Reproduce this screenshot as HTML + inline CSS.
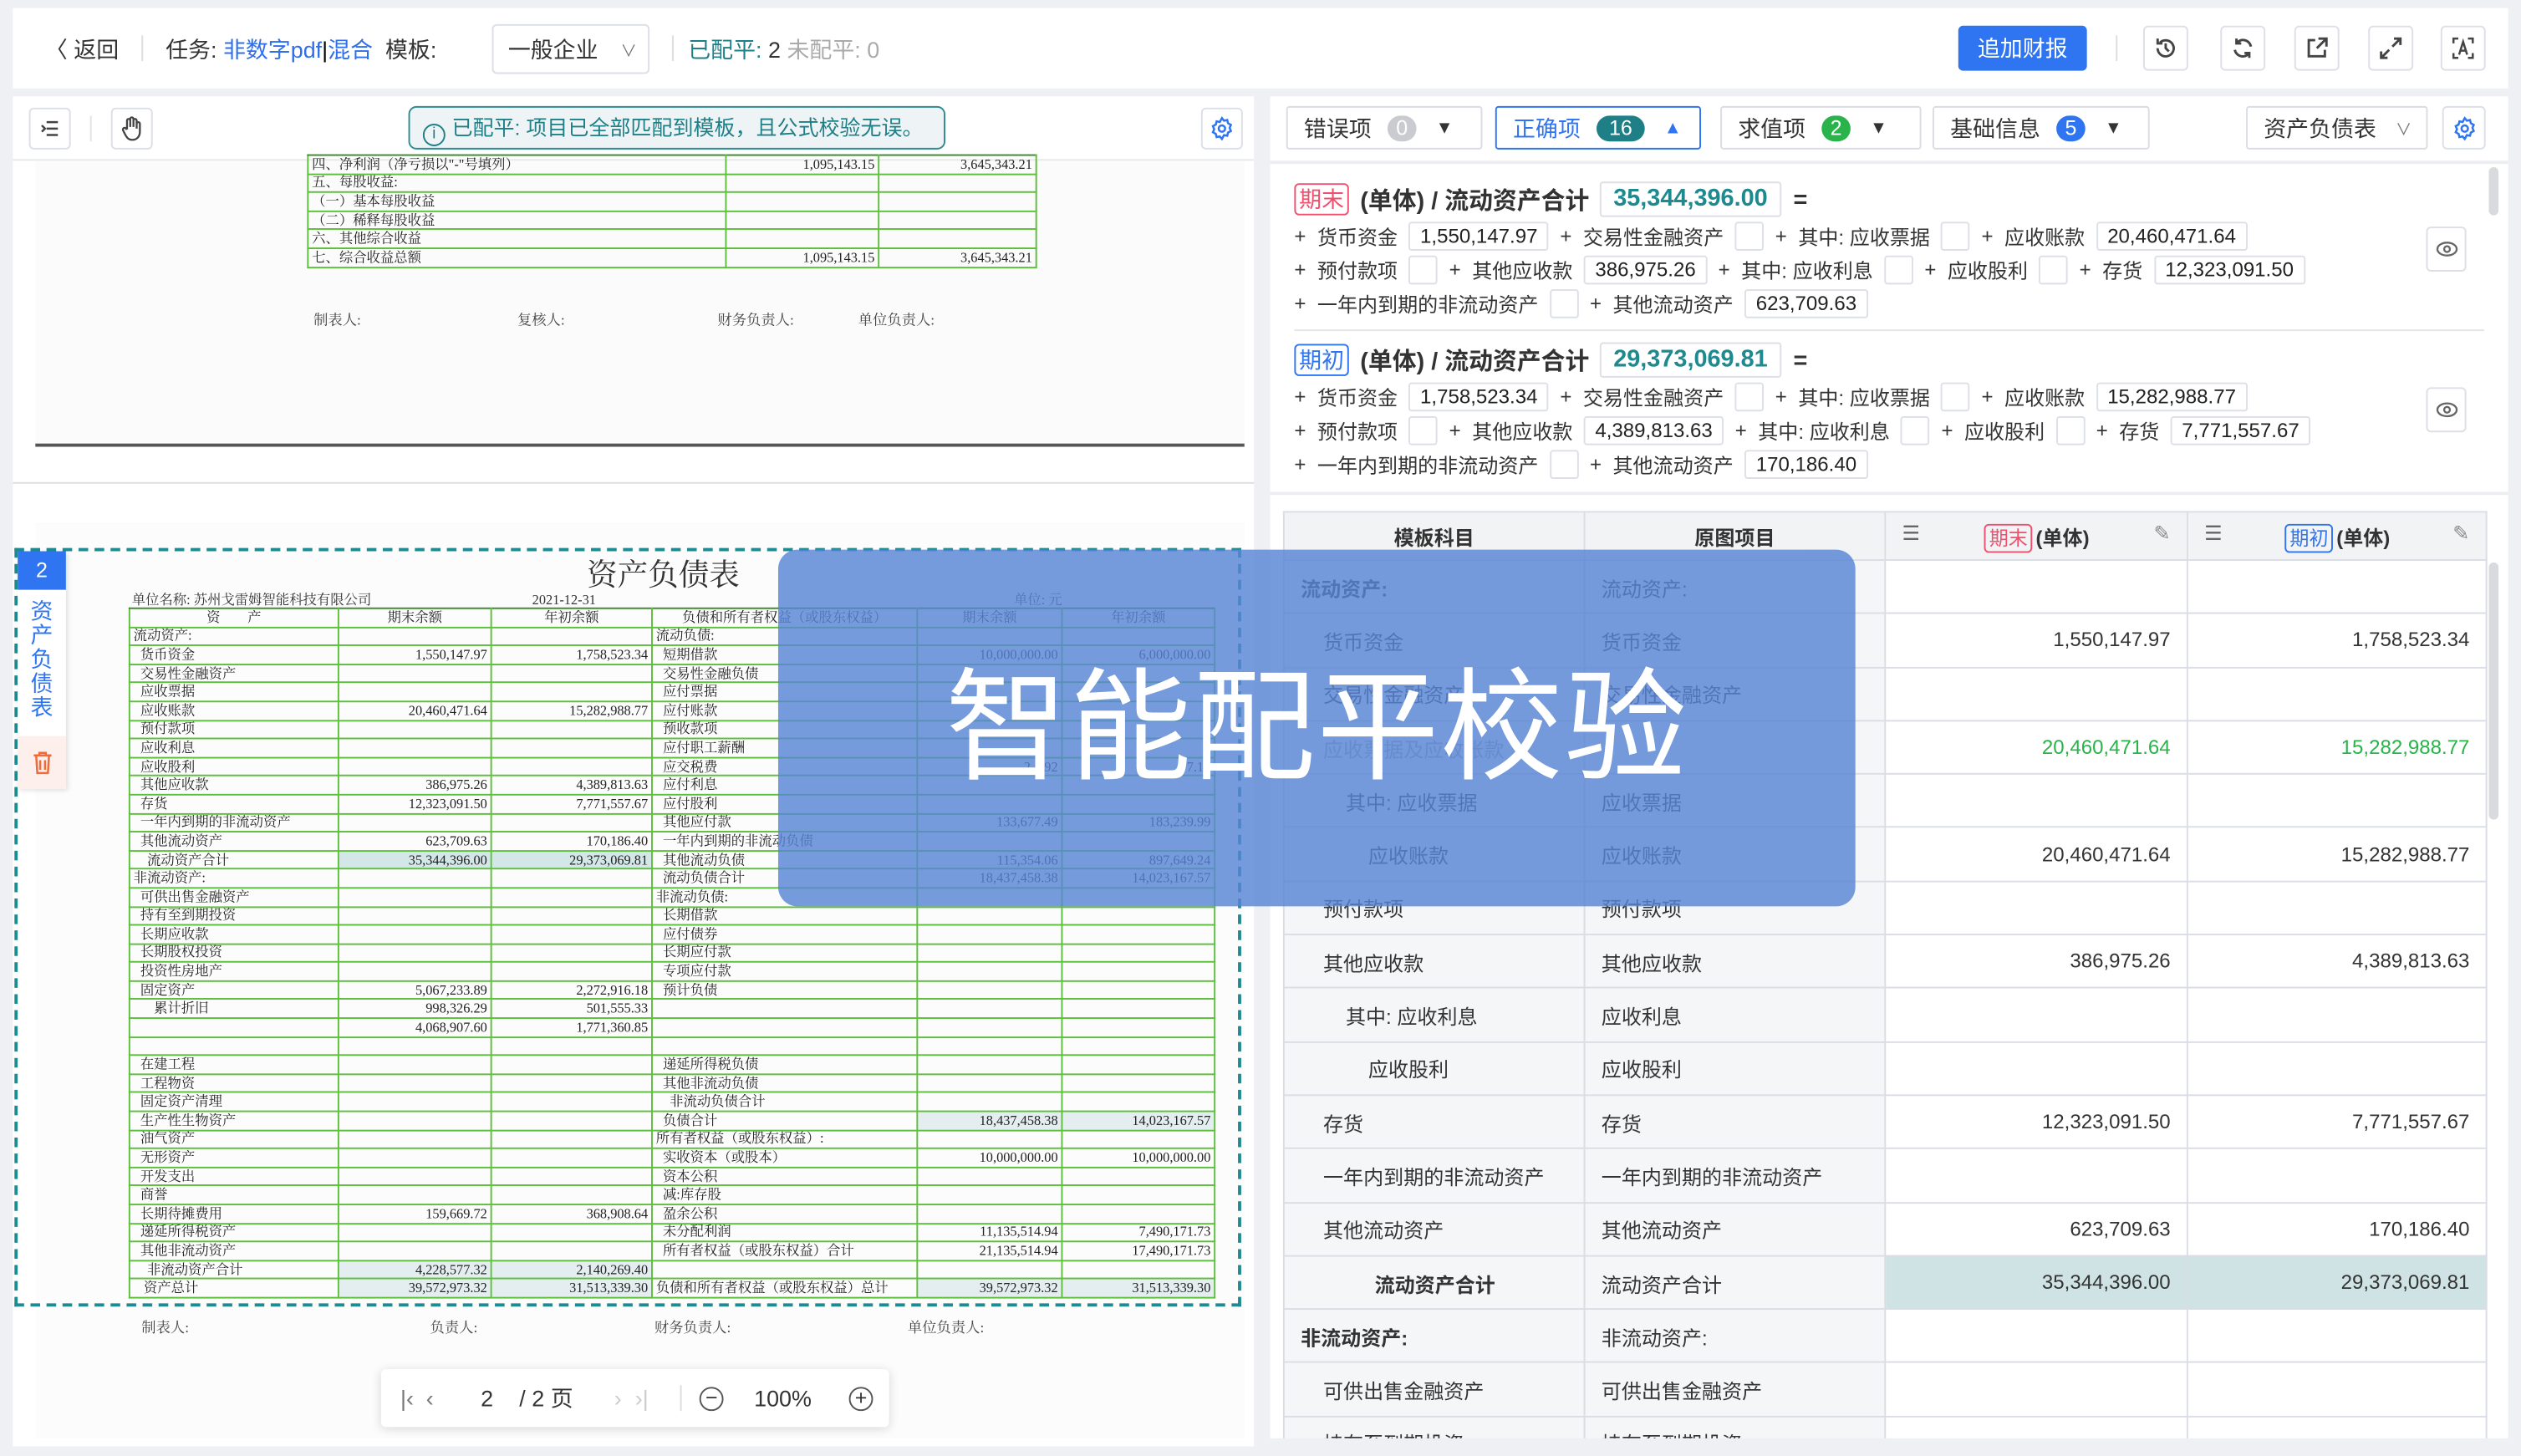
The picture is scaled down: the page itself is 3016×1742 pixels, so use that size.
<!DOCTYPE html>
<html><head><meta charset="utf-8">
<style>
*{box-sizing:border-box;margin:0;padding:0}
html,body{width:3016px;height:1742px;overflow:hidden;background:#eef0f4}
body{font-family:"Liberation Sans","Noto Sans CJK SC",sans-serif;color:#333}
#r{position:absolute;left:0;top:0;width:1568px;height:906px;transform:scale(1.92347,1.92274);transform-origin:0 0;background:#eef0f4;overflow:hidden}
.a{position:absolute}
.ib{position:absolute;border:1px solid #dcdfe6;border-radius:3px;background:#fff;display:flex;align-items:center;justify-content:center}
.t13{font-size:13px}
.btn{position:absolute;top:66px;height:27px;border:1px solid #d9dce2;border-radius:2px;background:#fff;display:flex;align-items:center;padding-left:10px;font-size:14px;color:#333}
.bd{display:inline-block;min-width:18px;height:16px;border-radius:9px;color:#fff;font-size:13px;line-height:16px;text-align:center;margin-left:10px;padding:0 3px}
.fr{position:absolute;left:805px;font-size:12.5px;color:#333;display:flex;align-items:center;white-space:nowrap}
.fr span{margin-right:7px}
.bx{display:inline-block;height:18px;border:1px solid #dcdfe6;border-radius:2px;padding:0 6px;line-height:16px;margin-right:7px;font-size:12.5px;color:#222}
.bx.e{width:18px;padding:0}
.tg{display:inline-block;font-size:13px;border-radius:3px;padding:0 2px;height:18px;line-height:16px;margin-right:2px}
table.rt{position:absolute;left:798px;top:318px;width:749px;border-collapse:collapse;font-size:12.5px}
table.rt td{border:1px solid #dadde3;height:33.3px;padding:0 10px;color:#333}
table.rt tr td:nth-child(1),table.rt tr td:nth-child(2){background:#f5f6f8}
table.rt td.n{text-align:right;background:#fff}
table.rt tr.h td{background:#f2f3f5;height:30px;font-weight:bold;text-align:center}
table.sc{position:absolute;left:80px;top:378px;width:676px;border-collapse:collapse;font-family:"Liberation Serif","Noto Serif CJK SC",serif;font-size:8.5px;color:#222}
table.sc td{border:1px solid #5cbf3a;border-top:1.5px solid #3a8a2a;height:11.6px;padding:0 2px;white-space:nowrap;overflow:hidden;line-height:9px}
table.sc td.n{text-align:right}
</style></head><body><div id="r">

<!-- top bar -->
<div class="a" style="left:8px;top:5px;width:1552px;height:50px;background:#fff"></div>
<div class="a t13" style="left:28px;top:21px;font-size:14px;color:#333">〈 返回</div>
<div class="a" style="left:88px;top:22px;width:1px;height:16px;background:#ddd"></div>
<div class="a" style="left:103px;top:21px;font-size:14px;white-space:nowrap">任务: <span style="color:#2f6fec">非数字pdf</span><span style="color:#000">|</span><span style="color:#2f6fec">混合</span> &nbsp;模板:</div>
<div class="ib" style="left:306px;top:15px;width:98px;height:31px;justify-content:flex-start;padding-left:9px;font-size:14px;color:#333">一般企业 <span style="margin-left:14px;font-size:10px;color:#777">∨</span></div>
<div class="a" style="left:418px;top:22px;width:1px;height:16px;background:#ddd"></div>
<div class="a" style="left:428px;top:21px;font-size:14px;white-space:nowrap"><span style="color:#1e7f86">已配平:</span> 2 <span style="color:#aaa">未配平: 0</span></div>
<div class="a" style="left:1218px;top:16px;width:80px;height:28px;background:#2f74f0;border-radius:3px;color:#fff;font-size:14px;text-align:center;line-height:28px">追加财报</div>
<div class="a" style="left:1316px;top:22px;width:1px;height:16px;background:#ddd"></div>
<div class="ib" style="left:1333px;top:16px;width:28px;height:28px"><svg width="16" height="16" viewBox="0 0 16 16" fill="none" stroke="#444" stroke-width="1.5"><path d="M3 8a5 5 0 1 0 1.5-3.5M3 2v3h3M8 5v3l2 2"/></svg></div>
<div class="ib" style="left:1381px;top:16px;width:28px;height:28px"><svg width="16" height="16" viewBox="0 0 16 16" fill="none" stroke="#444" stroke-width="1.5"><path d="M13 7a5 5 0 0 0-9-2M3 9a5 5 0 0 0 9 2M4 2v3h3M12 14v-3H9"/></svg></div>
<div class="ib" style="left:1427px;top:16px;width:28px;height:28px"><svg width="16" height="16" viewBox="0 0 16 16" fill="none" stroke="#444" stroke-width="1.5"><path d="M7 3H3v10h10V9M9 2h5v5M14 2L8 8"/></svg></div>
<div class="ib" style="left:1473px;top:16px;width:28px;height:28px"><svg width="16" height="16" viewBox="0 0 16 16" fill="none" stroke="#444" stroke-width="1.5"><path d="M10 2h4v4M14 2L9 7M6 14H2v-4M2 14l5-5"/></svg></div>
<div class="ib" style="left:1518px;top:16px;width:28px;height:28px"><svg width="16" height="16" viewBox="0 0 16 16" fill="none" stroke="#444" stroke-width="1.3"><path d="M2 5V2h3M11 2h3v3M14 11v3h-3M5 14H2v-3M5.5 12L8 4l2.5 8M6.5 9.5h3"/></svg></div>

<!-- left panel -->
<div class="a" style="left:8px;top:60px;width:772px;height:840px;background:#fff"></div>
<div class="ib" style="left:18px;top:67px;width:26px;height:26px"><svg width="14" height="14" viewBox="0 0 14 14" stroke="#444" stroke-width="1.3" fill="none"><path d="M5 3h7M5 7h7M5 11h7M2 5l2 2-2 2"/></svg></div>
<div class="a" style="left:56px;top:72px;width:1px;height:16px;background:#e3e3e3"></div>
<div class="ib" style="left:69px;top:67px;width:26px;height:26px"><svg width="14" height="16" viewBox="0 0 14 16" stroke="#444" stroke-width="1.2" fill="none"><path d="M4 8V3a1 1 0 0 1 2 0v4V2a1 1 0 0 1 2 0v5V3a1 1 0 0 1 2 0v5V5a1 1 0 0 1 2 0v5c0 3-2 5-4.5 5S4 14 2.5 11L1.5 9a1 1 0 0 1 2-.8z"/></svg></div>
<div class="a" style="left:254px;top:66px;width:334px;height:27px;border:1px solid #2e8b8f;border-radius:5px;background:#eef4f6;color:#1e7f86;font-size:13px;line-height:25px;padding-left:8px;white-space:nowrap"><span style="display:inline-block;width:14px;height:14px;border:1.3px solid #1e7f86;border-radius:50%;font-size:10px;line-height:12px;text-align:center;vertical-align:-2px;margin-right:4px">i</span>已配平: 项目已全部匹配到模板，且公式校验无误。</div>
<div class="ib" style="left:747px;top:67px;width:26px;height:26px"><svg width="16" height="16" viewBox="0 0 16 16" stroke="#2f74f0" stroke-width="1.3" fill="none"><path d="M8 1.5l1.3 1.6 2-.4.5 2 1.8 1-.8 1.9.8 1.9-1.8 1-.5 2-2-.4L8 14.5l-1.3-1.6-2 .4-.5-2-1.8-1 .8-1.9-.8-1.9 1.8-1 .5-2 2 .4z"/><circle cx="8" cy="8" r="2"/></svg></div>
<div class="a" style="left:8px;top:99px;width:772px;height:1px;background:#e6e8ec"></div>

<!-- page 1 tail -->
<div class="a" style="left:22px;top:100px;width:752px;height:178px;background:#fbfbfb;border-bottom:2px solid #555"></div>
<table class="sc" style="left:191px;top:96px;width:454px">
<tr><td style="width:260px">四、净利润（净亏损以"-"号填列）</td><td class="n" style="width:95px">1,095,143.15</td><td class="n">3,645,343.21</td></tr>
<tr><td>五、每股收益:</td><td></td><td></td></tr>
<tr><td>（一）基本每股收益</td><td></td><td></td></tr>
<tr><td>（二）稀释每股收益</td><td></td><td></td></tr>
<tr><td>六、其他综合收益</td><td></td><td></td></tr>
<tr><td>七、综合收益总额</td><td class="n">1,095,143.15</td><td class="n">3,645,343.21</td></tr>
</table>
<div class="a" style="left:195px;top:192px;font-size:9px;font-family:'Liberation Serif','Noto Serif CJK SC',serif;color:#444;white-space:nowrap">制表人: <span style="margin-left:95px">复核人:</span><span style="margin-left:95px">财务负责人:</span><span style="margin-left:40px">单位负责人:</span></div>
<div class="a" style="left:8px;top:300px;width:772px;height:1px;background:#ddd"></div>
<div class="a" style="left:22px;top:325px;width:752px;height:570px;background:#fcfcfc"></div>

<!-- page 2 scan -->
<div class="a" style="left:365px;top:343px;font-size:19px;font-family:'Liberation Serif','Noto Serif CJK SC',serif;color:#333">资产负债表</div>
<div class="a" style="left:82px;top:367px;font-size:8.5px;font-family:'Liberation Serif','Noto Serif CJK SC',serif;color:#333;white-space:nowrap">单位名称: 苏州戈雷姆智能科技有限公司<span style="margin-left:100px">2021-12-31</span><span style="margin-left:260px">单位: 元</span></div>
<table class="sc">
<tr><td style="width:130px;text-align:center">资　　产</td><td style="width:95px;text-align:center">期末余额</td><td style="width:100px;text-align:center">年初余额</td><td style="width:165px;text-align:center">负债和所有者权益（或股东权益）</td><td style="width:90px;text-align:center">期末余额</td><td style="text-align:center">年初余额</td></tr>
<tr><td>流动资产:</td><td></td><td></td><td>流动负债:</td><td></td><td></td></tr>
<tr><td>&nbsp;&nbsp;货币资金</td><td class="n">1,550,147.97</td><td class="n">1,758,523.34</td><td>&nbsp;&nbsp;短期借款</td><td class="n">10,000,000.00</td><td class="n">6,000,000.00</td></tr>
<tr><td>&nbsp;&nbsp;交易性金融资产</td><td></td><td></td><td>&nbsp;&nbsp;交易性金融负债</td><td></td><td></td></tr>
<tr><td>&nbsp;&nbsp;应收票据</td><td></td><td></td><td>&nbsp;&nbsp;应付票据</td><td></td><td></td></tr>
<tr><td>&nbsp;&nbsp;应收账款</td><td class="n">20,460,471.64</td><td class="n">15,282,988.77</td><td>&nbsp;&nbsp;应付账款</td><td></td><td></td></tr>
<tr><td>&nbsp;&nbsp;预付款项</td><td></td><td></td><td>&nbsp;&nbsp;预收款项</td><td></td><td></td></tr>
<tr><td>&nbsp;&nbsp;应收利息</td><td></td><td></td><td>&nbsp;&nbsp;应付职工薪酬</td><td></td><td></td></tr>
<tr><td>&nbsp;&nbsp;应收股利</td><td></td><td></td><td>&nbsp;&nbsp;应交税费</td><td class="n">2,4.92</td><td class="n">7.17</td></tr>
<tr><td>&nbsp;&nbsp;其他应收款</td><td class="n">386,975.26</td><td class="n">4,389,813.63</td><td>&nbsp;&nbsp;应付利息</td><td></td><td></td></tr>
<tr><td>&nbsp;&nbsp;存货</td><td class="n">12,323,091.50</td><td class="n">7,771,557.67</td><td>&nbsp;&nbsp;应付股利</td><td></td><td></td></tr>
<tr><td>&nbsp;&nbsp;一年内到期的非流动资产</td><td></td><td></td><td>&nbsp;&nbsp;其他应付款</td><td class="n">133,677.49</td><td class="n">183,239.99</td></tr>
<tr><td>&nbsp;&nbsp;其他流动资产</td><td class="n">623,709.63</td><td class="n">170,186.40</td><td>&nbsp;&nbsp;一年内到期的非流动负债</td><td></td><td></td></tr>
<tr><td>&nbsp;&nbsp;&nbsp;&nbsp;流动资产合计</td><td class="n" style="background:#d3e6e8">35,344,396.00</td><td class="n" style="background:#d3e6e8">29,373,069.81</td><td>&nbsp;&nbsp;其他流动负债</td><td class="n">115,354.06</td><td class="n">897,649.24</td></tr>
<tr><td>非流动资产:</td><td></td><td></td><td>&nbsp;&nbsp;流动负债合计</td><td class="n">18,437,458.38</td><td class="n">14,023,167.57</td></tr>
<tr><td>&nbsp;&nbsp;可供出售金融资产</td><td></td><td></td><td>非流动负债:</td><td></td><td></td></tr>
<tr><td>&nbsp;&nbsp;持有至到期投资</td><td></td><td></td><td>&nbsp;&nbsp;长期借款</td><td></td><td></td></tr>
<tr><td>&nbsp;&nbsp;长期应收款</td><td></td><td></td><td>&nbsp;&nbsp;应付债券</td><td></td><td></td></tr>
<tr><td>&nbsp;&nbsp;长期股权投资</td><td></td><td></td><td>&nbsp;&nbsp;长期应付款</td><td></td><td></td></tr>
<tr><td>&nbsp;&nbsp;投资性房地产</td><td></td><td></td><td>&nbsp;&nbsp;专项应付款</td><td></td><td></td></tr>
<tr><td>&nbsp;&nbsp;固定资产</td><td class="n">5,067,233.89</td><td class="n">2,272,916.18</td><td>&nbsp;&nbsp;预计负债</td><td></td><td></td></tr>
<tr><td>&nbsp;&nbsp;&nbsp;&nbsp;&nbsp;&nbsp;累计折旧</td><td class="n">998,326.29</td><td class="n">501,555.33</td><td></td><td></td><td></td></tr>
<tr><td></td><td class="n">4,068,907.60</td><td class="n">1,771,360.85</td><td></td><td></td><td></td></tr>
<tr><td></td><td></td><td></td><td></td><td></td><td></td></tr>
<tr><td>&nbsp;&nbsp;在建工程</td><td></td><td></td><td>&nbsp;&nbsp;递延所得税负债</td><td></td><td></td></tr>
<tr><td>&nbsp;&nbsp;工程物资</td><td></td><td></td><td>&nbsp;&nbsp;其他非流动负债</td><td></td><td></td></tr>
<tr><td>&nbsp;&nbsp;固定资产清理</td><td></td><td></td><td>&nbsp;&nbsp;&nbsp;&nbsp;非流动负债合计</td><td></td><td></td></tr>
<tr><td>&nbsp;&nbsp;生产性生物资产</td><td></td><td></td><td>&nbsp;&nbsp;负债合计</td><td class="n" style="background:#e4eef0">18,437,458.38</td><td class="n" style="background:#e4eef0">14,023,167.57</td></tr>
<tr><td>&nbsp;&nbsp;油气资产</td><td></td><td></td><td>所有者权益（或股东权益）:</td><td></td><td></td></tr>
<tr><td>&nbsp;&nbsp;无形资产</td><td></td><td></td><td>&nbsp;&nbsp;实收资本（或股本）</td><td class="n">10,000,000.00</td><td class="n">10,000,000.00</td></tr>
<tr><td>&nbsp;&nbsp;开发支出</td><td></td><td></td><td>&nbsp;&nbsp;资本公积</td><td></td><td></td></tr>
<tr><td>&nbsp;&nbsp;商誉</td><td></td><td></td><td>&nbsp;&nbsp;减:库存股</td><td></td><td></td></tr>
<tr><td>&nbsp;&nbsp;长期待摊费用</td><td class="n">159,669.72</td><td class="n">368,908.64</td><td>&nbsp;&nbsp;盈余公积</td><td></td><td></td></tr>
<tr><td>&nbsp;&nbsp;递延所得税资产</td><td></td><td></td><td>&nbsp;&nbsp;未分配利润</td><td class="n">11,135,514.94</td><td class="n">7,490,171.73</td></tr>
<tr><td>&nbsp;&nbsp;其他非流动资产</td><td></td><td></td><td>&nbsp;&nbsp;所有者权益（或股东权益）合计</td><td class="n">21,135,514.94</td><td class="n">17,490,171.73</td></tr>
<tr><td>&nbsp;&nbsp;&nbsp;&nbsp;非流动资产合计</td><td class="n" style="background:#e4eef0">4,228,577.32</td><td class="n" style="background:#e4eef0">2,140,269.40</td><td></td><td></td><td></td></tr>
<tr><td>&nbsp;&nbsp;&nbsp;资产总计</td><td class="n" style="background:#e4eef0">39,572,973.32</td><td class="n" style="background:#e4eef0">31,513,339.30</td><td>负债和所有者权益（或股东权益）总计</td><td class="n" style="background:#e4eef0">39,572,973.32</td><td class="n" style="background:#e4eef0">31,513,339.30</td></tr>
</table>
<div class="a" style="left:88px;top:819px;font-size:9px;font-family:'Liberation Serif','Noto Serif CJK SC',serif;color:#444;white-space:nowrap">制表人:<span style="margin-left:150px">负责人:</span><span style="margin-left:110px">财务负责人:</span><span style="margin-left:110px">单位负责人:</span></div>
<div class="a" style="left:9px;top:341px;width:763px;height:472px;border:2px dashed #1f8a90"></div>
<div class="a" style="left:11px;top:343px;width:30px;height:148px;background:#fff;box-shadow:1px 1px 3px rgba(0,0,0,.12)"></div>
<div class="a" style="left:11px;top:343px;width:30px;height:24px;background:#2f74f0;color:#fff;font-size:13px;text-align:center;line-height:24px">2</div>
<div class="a" style="left:17px;top:373px;width:18px;font-size:14px;line-height:15px;color:#2f74f0;text-align:center">资<br>产<br>负<br>债<br>表</div>
<div class="a" style="left:11px;top:458px;width:30px;height:33px;background:#fdf0ec"></div>
<svg class="a" style="left:20px;top:467px" width="13" height="15" viewBox="0 0 13 15" fill="none" stroke="#f06a3a" stroke-width="1.3"><path d="M1 3h11M4.5 3V1.5h4V3M2.5 3l.7 11h6.6l.7-11M5 6v6M8 6v6"/></svg>

<!-- pager -->
<div class="a" style="left:237px;top:852px;width:316px;height:36px;background:#fff;box-shadow:0 1px 6px rgba(0,0,0,.15);border-radius:3px;font-size:14px;color:#333;white-space:nowrap;line-height:36px">
<span style="position:absolute;left:12px;color:#777">|‹</span><span style="position:absolute;left:28px;color:#777">‹</span>
<span style="position:absolute;left:62px">2</span><span style="position:absolute;left:86px">/ 2 页</span>
<span style="position:absolute;left:145px;color:#ccc">›</span><span style="position:absolute;left:158px;color:#ccc">›|</span>
<span style="position:absolute;left:186px;top:10px;width:1px;height:16px;background:#ddd"></span>
<span style="position:absolute;left:198px;top:11px;width:15px;height:15px;border:1.3px solid #555;border-radius:50%;line-height:11px;text-align:center;font-size:13px">−</span>
<span style="position:absolute;left:232px">100%</span>
<span style="position:absolute;left:291px;top:11px;width:15px;height:15px;border:1.3px solid #555;border-radius:50%;line-height:11px;text-align:center;font-size:13px">+</span>
</div>

<!-- right panel -->
<div class="a" style="left:790px;top:60px;width:770px;height:840px;background:#fff"></div>
<div class="btn" style="left:800px;width:122px">错误项<span class="bd" style="background:#c9cbd0">0</span><span style="margin-left:12px;font-size:11px">▼</span></div>
<div class="btn" style="left:930px;width:128px;border-color:#2f74f0;color:#2f74f0">正确项<span class="bd" style="background:#1e7f86;width:30px">16</span><span style="margin-left:12px;font-size:11px">▲</span></div>
<div class="btn" style="left:1070px;width:125px">求值项<span class="bd" style="background:#2ab34a">2</span><span style="margin-left:12px;font-size:11px">▼</span></div>
<div class="btn" style="left:1202px;width:135px">基础信息<span class="bd" style="background:#2f74f0">5</span><span style="margin-left:12px;font-size:11px">▼</span></div>
<div class="btn" style="left:1397px;width:113px">资产负债表<span style="margin-left:12px;font-size:10px;color:#777">∨</span></div>
<div class="ib" style="left:1519px;top:66px;width:27px;height:27px"><svg width="16" height="16" viewBox="0 0 16 16" stroke="#2f74f0" stroke-width="1.3" fill="none"><path d="M8 1.5l1.3 1.6 2-.4.5 2 1.8 1-.8 1.9.8 1.9-1.8 1-.5 2-2-.4L8 14.5l-1.3-1.6-2 .4-.5-2-1.8-1 .8-1.9-.8-1.9 1.8-1 .5-2 2 .4z"/><circle cx="8" cy="8" r="2"/></svg></div>
<div class="a" style="left:790px;top:100px;width:770px;height:2px;background:#eceef1"></div>

<!-- formula 1 -->
<div class="fr" style="top:113px;font-size:15px;font-weight:bold"><span class="tg" style="border:1px solid #f0506e;color:#f0506e;font-weight:normal;height:20px;line-height:18px;font-size:14px">期末</span>(单体) / 流动资产合计 <span class="bx" style="margin-left:6px;height:22px;line-height:20px;font-size:15px;color:#1e8a8f;padding:0 8px;font-weight:bold">35,344,396.00</span>=</div>
<div class="fr" style="top:137px"><span>+</span><span>货币资金</span><span class="bx">1,550,147.97</span><span>+</span><span>交易性金融资产</span><span class="bx e"></span><span>+</span><span>其中: 应收票据</span><span class="bx e"></span><span>+</span><span>应收账款</span><span class="bx">20,460,471.64</span></div>
<div class="fr" style="top:158px"><span>+</span><span>预付款项</span><span class="bx e"></span><span>+</span><span>其他应收款</span><span class="bx">386,975.26</span><span>+</span><span>其中: 应收利息</span><span class="bx e"></span><span>+</span><span>应收股利</span><span class="bx e"></span><span>+</span><span>存货</span><span class="bx">12,323,091.50</span></div>
<div class="fr" style="top:179px"><span>+</span><span>一年内到期的非流动资产</span><span class="bx e"></span><span>+</span><span>其他流动资产</span><span class="bx">623,709.63</span></div>
<div class="ib" style="left:1509px;top:141px;width:25px;height:28px"><svg width="14" height="10" viewBox="0 0 14 10" fill="none" stroke="#666" stroke-width="1.2"><ellipse cx="7" cy="5" rx="6" ry="4"/><circle cx="7" cy="5" r="1.8"/></svg></div>
<div class="a" style="left:805px;top:205px;width:740px;height:1px;background:#e3e5e9"></div>
<!-- formula 2 -->
<div class="fr" style="top:213px;font-size:15px;font-weight:bold"><span class="tg" style="border:1px solid #2f74f0;color:#2f74f0;font-weight:normal;height:20px;line-height:18px;font-size:14px">期初</span>(单体) / 流动资产合计 <span class="bx" style="margin-left:6px;height:22px;line-height:20px;font-size:15px;color:#1e8a8f;padding:0 8px;font-weight:bold">29,373,069.81</span>=</div>
<div class="fr" style="top:237px"><span>+</span><span>货币资金</span><span class="bx">1,758,523.34</span><span>+</span><span>交易性金融资产</span><span class="bx e"></span><span>+</span><span>其中: 应收票据</span><span class="bx e"></span><span>+</span><span>应收账款</span><span class="bx">15,282,988.77</span></div>
<div class="fr" style="top:258px"><span>+</span><span>预付款项</span><span class="bx e"></span><span>+</span><span>其他应收款</span><span class="bx">4,389,813.63</span><span>+</span><span>其中: 应收利息</span><span class="bx e"></span><span>+</span><span>应收股利</span><span class="bx e"></span><span>+</span><span>存货</span><span class="bx">7,771,557.67</span></div>
<div class="fr" style="top:279px"><span>+</span><span>一年内到期的非流动资产</span><span class="bx e"></span><span>+</span><span>其他流动资产</span><span class="bx">170,186.40</span></div>
<div class="ib" style="left:1509px;top:241px;width:25px;height:28px"><svg width="14" height="10" viewBox="0 0 14 10" fill="none" stroke="#666" stroke-width="1.2"><ellipse cx="7" cy="5" rx="6" ry="4"/><circle cx="7" cy="5" r="1.8"/></svg></div>
<div class="a" style="left:790px;top:306px;width:770px;height:2px;background:#eceef1"></div>
<div class="a" style="left:1548px;top:104px;width:6px;height:30px;background:#d8dadd;border-radius:3px"></div>

<table class="rt">
<tr class="h"><td style="width:187px">模板科目</td><td style="width:187px">原图项目</td><td style="width:188px"><span style="float:left;font-weight:normal;color:#666">☰</span><span class="tg" style="border:1px solid #f0506e;color:#f0506e;font-weight:normal;font-size:12px">期末</span>(单体)<span style="float:right;font-weight:normal;color:#888">✎</span></td><td><span style="float:left;font-weight:normal;color:#666">☰</span><span class="tg" style="border:1px solid #2f74f0;color:#2f74f0;font-weight:normal;font-size:12px">期初</span>(单体)<span style="float:right;font-weight:normal;color:#888">✎</span></td></tr>
<tr><td style="font-weight:bold">流动资产:</td><td>流动资产:</td><td class="n"></td><td class="n"></td></tr>
<tr><td style="padding-left:24px">货币资金</td><td>货币资金</td><td class="n">1,550,147.97</td><td class="n">1,758,523.34</td></tr>
<tr><td style="padding-left:24px">交易性金融资产</td><td>交易性金融资产</td><td class="n"></td><td class="n"></td></tr>
<tr><td style="padding-left:24px;color:#aaa">应收票据及应收账款</td><td></td><td class="n" style="color:#2ab34a">20,460,471.64</td><td class="n" style="color:#2ab34a">15,282,988.77</td></tr>
<tr><td style="padding-left:38px">其中: 应收票据</td><td>应收票据</td><td class="n"></td><td class="n"></td></tr>
<tr><td style="padding-left:52px">应收账款</td><td>应收账款</td><td class="n">20,460,471.64</td><td class="n">15,282,988.77</td></tr>
<tr><td style="padding-left:24px">预付款项</td><td>预付款项</td><td class="n"></td><td class="n"></td></tr>
<tr><td style="padding-left:24px">其他应收款</td><td>其他应收款</td><td class="n">386,975.26</td><td class="n">4,389,813.63</td></tr>
<tr><td style="padding-left:38px">其中: 应收利息</td><td>应收利息</td><td class="n"></td><td class="n"></td></tr>
<tr><td style="padding-left:52px">应收股利</td><td>应收股利</td><td class="n"></td><td class="n"></td></tr>
<tr><td style="padding-left:24px">存货</td><td>存货</td><td class="n">12,323,091.50</td><td class="n">7,771,557.67</td></tr>
<tr><td style="padding-left:24px">一年内到期的非流动资产</td><td>一年内到期的非流动资产</td><td class="n"></td><td class="n"></td></tr>
<tr><td style="padding-left:24px">其他流动资产</td><td>其他流动资产</td><td class="n">623,709.63</td><td class="n">170,186.40</td></tr>
<tr><td style="padding-left:56px;font-weight:bold">流动资产合计</td><td>流动资产合计</td><td class="n" style="background:#cfe3e5">35,344,396.00</td><td class="n" style="background:#cfe3e5">29,373,069.81</td></tr>
<tr><td style="font-weight:bold">非流动资产:</td><td>非流动资产:</td><td class="n"></td><td class="n"></td></tr>
<tr><td style="padding-left:24px">可供出售金融资产</td><td>可供出售金融资产</td><td class="n"></td><td class="n"></td></tr>
<tr><td style="padding-left:24px">持有至到期投资</td><td>持有至到期投资</td><td class="n"></td><td class="n"></td></tr>
</table>
<div class="a" style="left:790px;top:895px;width:778px;height:11px;background:#eef0f4"></div>
<div class="a" style="left:1548px;top:350px;width:6px;height:160px;background:#d8dadd;border-radius:3px"></div>

<!-- overlay -->
<div class="a" style="left:484px;top:342px;width:670px;height:222px;background:rgba(88,133,212,0.82);border-radius:12px"></div>
<div class="a" style="left:484px;top:404px;width:670px;text-align:center;color:#fff;font-size:76px;line-height:100px;letter-spacing:1px">智能配平校验</div>
</div></body></html>
